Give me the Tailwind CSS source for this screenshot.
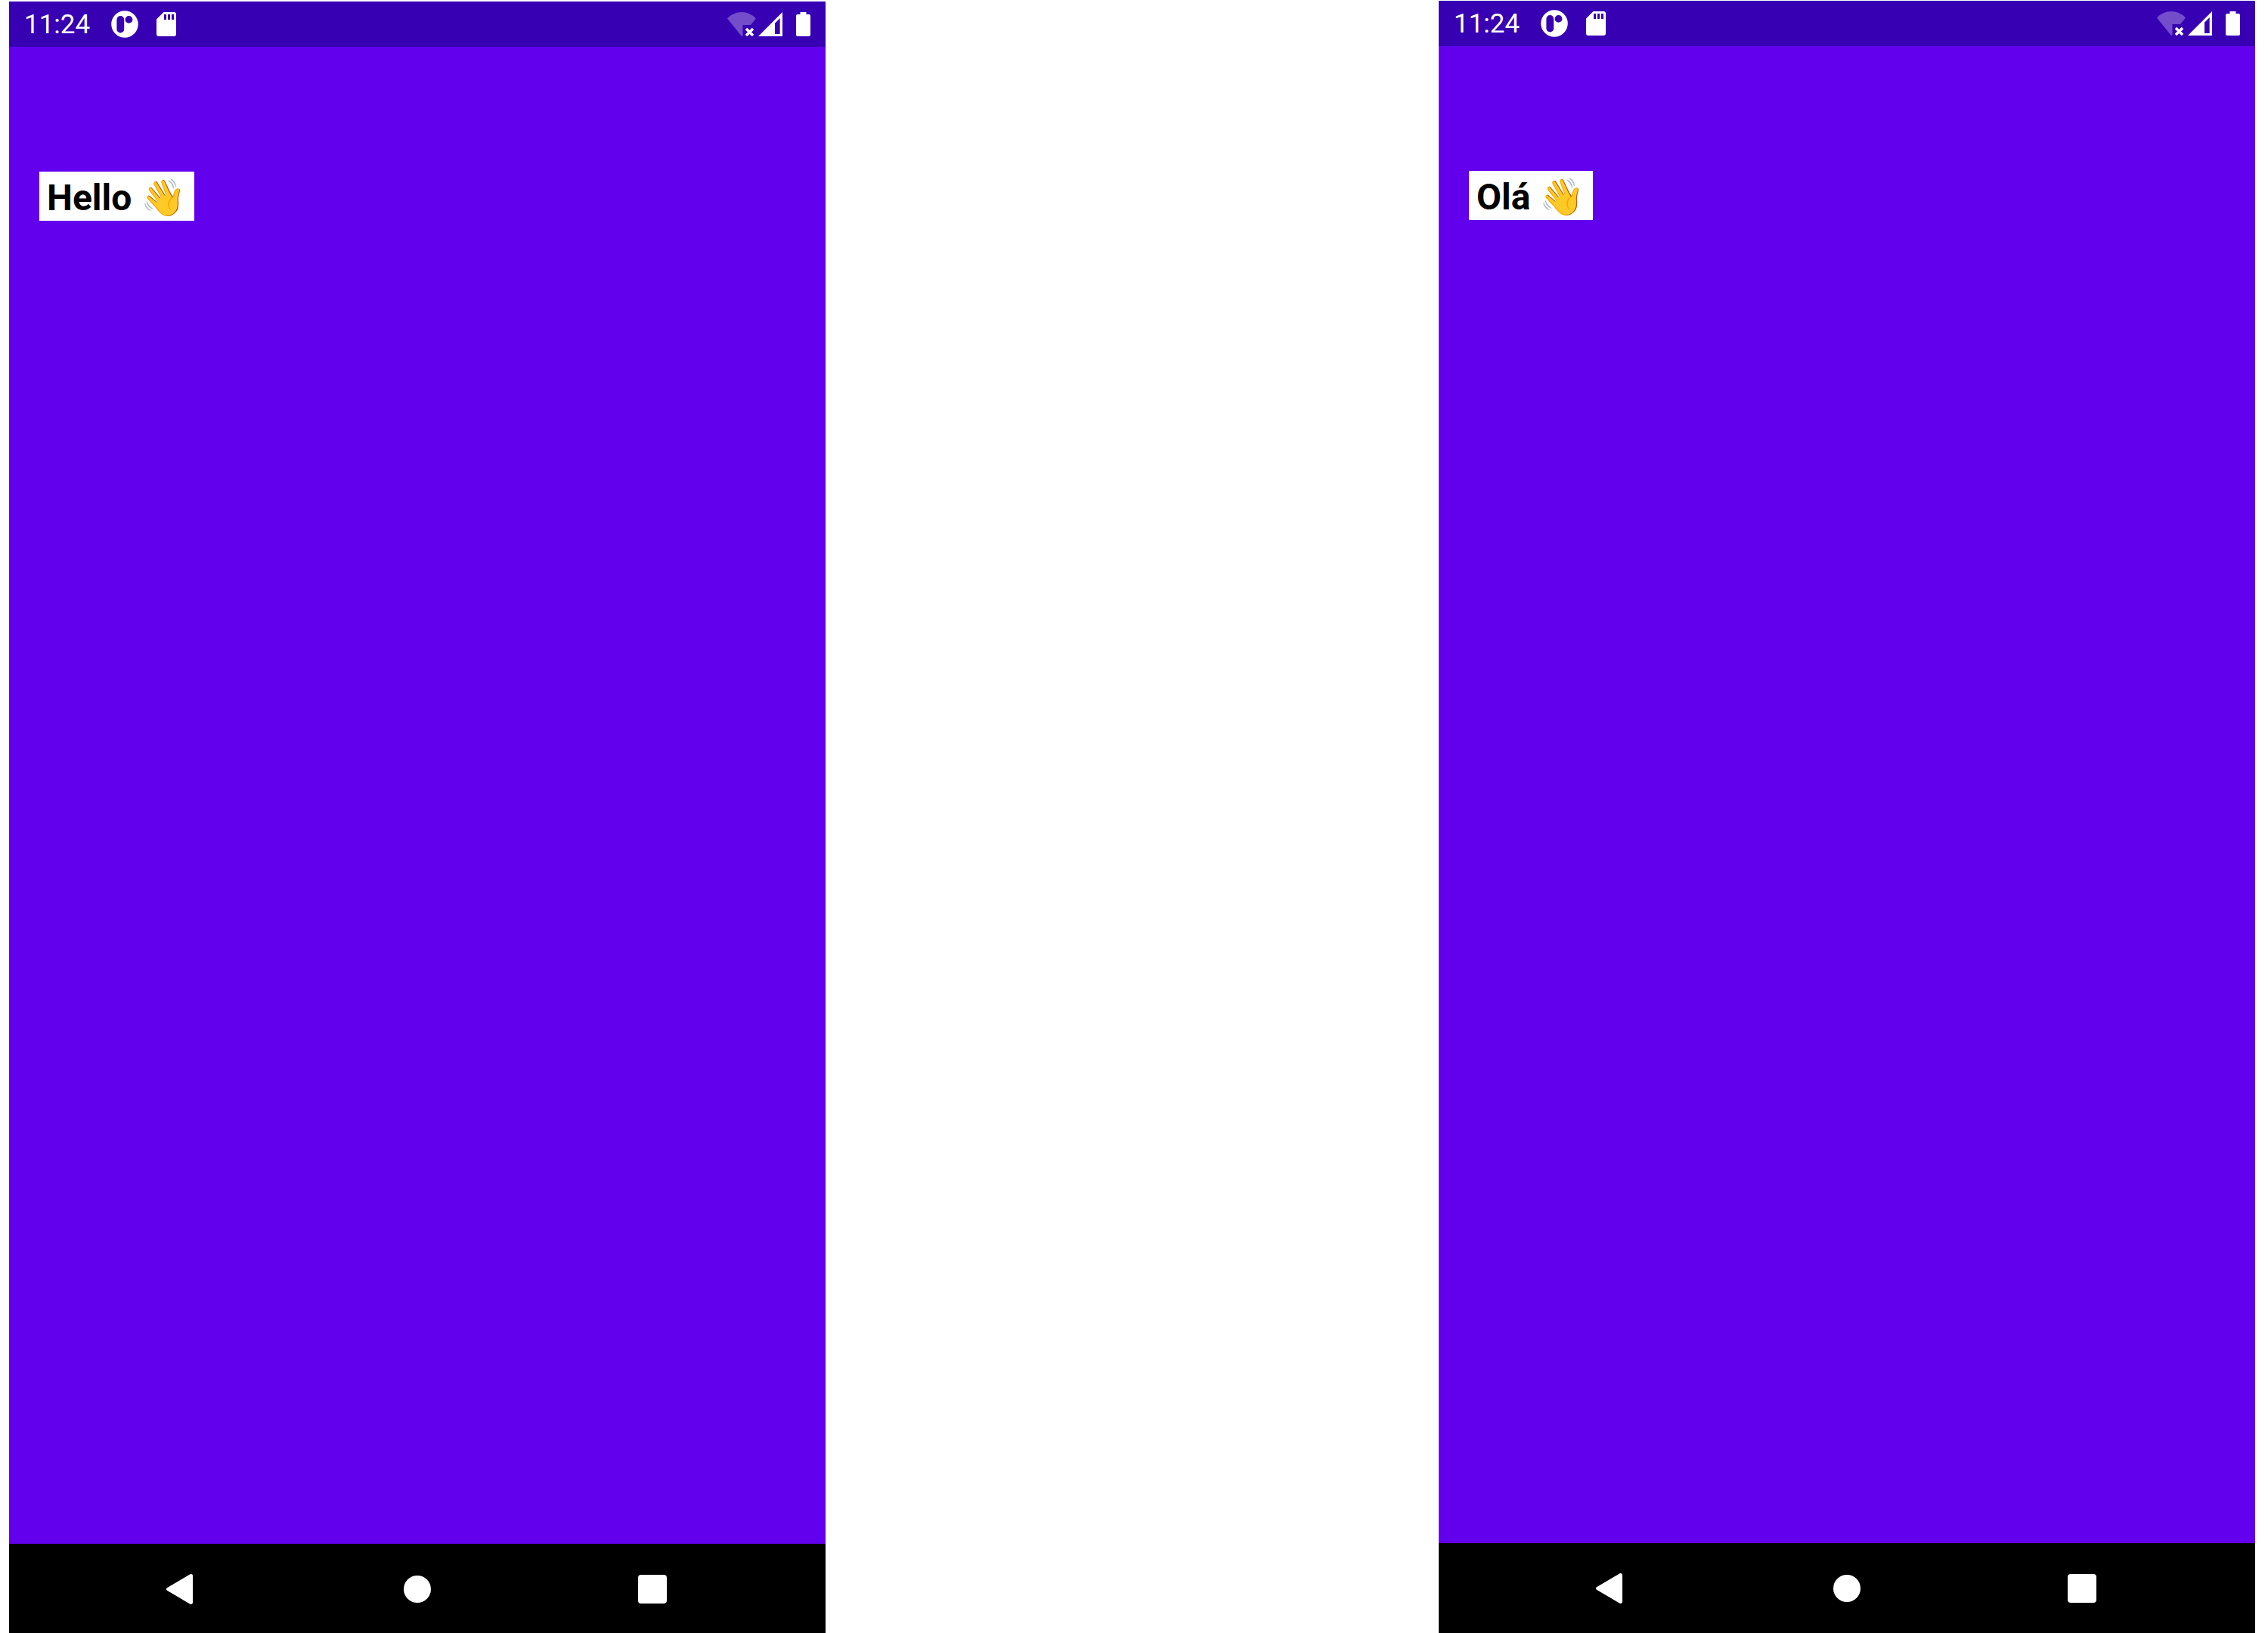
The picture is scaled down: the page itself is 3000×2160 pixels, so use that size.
<!DOCTYPE html>
<html lang="en">
<head>
<meta charset="utf-8">
<meta name="viewport" content="width=device-width, initial-scale=1">
<title>Greeting in two languages</title>
<script src="https://cdn.jsdelivr.net/npm/@tailwindcss/browser@4"></script>
</head>
<body class="bg-white">
<svg class="hidden" aria-hidden="true">
  <symbol id="app" viewBox="0 0 36 36"><path fill-rule="evenodd" d="M18 .2a17.8 17.8 0 1 0 0 35.6a17.8 17.8 0 1 0 0-35.6ZM12.300 7a4.900 4.900 0 0 1 4.900 4.900v12.700a4.900 4.900 0 0 1-9.800 0V11.900A4.900 4.900 0 0 1 12.300 7ZM23.500 7a4.900 4.900 0 1 1 0 9.800a4.900 4.900 0 1 1 0-9.800Z"/></symbol>
  <symbol id="sd" viewBox="0 0 26 34"><path fill-rule="evenodd" d="M9.500 1H23a3 3 0 0 1 3 3v26a3 3 0 0 1-3 3H3a3 3 0 0 1-3-3V10.500ZM10 4v7h3V4ZM15 4v7h3V4ZM20 4v7h3V4Z"/></symbol>
  <symbol id="wifi" viewBox="0 0 38 32"><path fill-opacity=".3" d="M0 8.500C5 3 12 0 19 0s14 3 19 8.500L31 17H20.500v14L19 32Z"/><path fill="none" stroke="currentColor" stroke-width="3.600" d="m25 22 9 9m0-9-9 9"/></symbol>
  <symbol id="signal" viewBox="0 0 32 32"><path fill-rule="evenodd" d="M32 0v32H0ZM28.700 8 22 14.700V29h6.700Z"/></symbol>
  <symbol id="battery" viewBox="0 0 19 32"><path d="M5.500 0h8v3H17a2 2 0 0 1 2 2v25a2 2 0 0 1-2 2H2a2 2 0 0 1-2-2V5a2 2 0 0 1 2-2h3.500Z"/></symbol>
  <symbol id="back" viewBox="0 0 35 40"><path d="M1 18.300 31.500.3C33.200-.5 35 .5 35 2.200v35.600c0 1.700-1.800 2.700-3.500 1.900L1 21.700C-.3 20.900-.3 19.100 1 18.300Z"/></symbol>
</svg>
<main class="flex h-screen items-start justify-between overflow-hidden pl-3 pr-[17px] font-['Roboto',sans-serif]">
  <section class="mt-0.5 flex h-screen w-[36vw] shrink-0 flex-col bg-[#6200ee]" aria-label="English">
    <header class="flex h-[60px] shrink-0 items-center bg-[#3700b3] px-5 text-white">
      <time class="pt-0.5 text-[35px] leading-10">11:24</time>
      <svg class="ml-7 size-9 fill-current"><use href="#app"/></svg>
      <svg class="ml-6 h-[34px] w-[26px] fill-current"><use href="#sd"/></svg>
      <svg class="ml-auto h-8 w-[38px] fill-current"><use href="#wifi"/></svg>
      <svg class="ml-[3px] size-8 fill-current"><use href="#signal"/></svg>
      <svg class="ml-[18px] h-8 w-[19px] fill-current"><use href="#battery"/></svg>
    </header>
    <div class="flex flex-1 items-start px-10 pt-[165px]">
      <p class="bg-white pl-2.5 pr-[11px] pt-1 text-[48px] leading-[61px] font-bold whitespace-nowrap text-black">Hello 👋</p>
    </div>
    <nav class="flex h-[120px] shrink-0 bg-black pl-[70px] pr-[74px] text-white">
      <button class="flex flex-1 items-center justify-center pr-1" aria-label="Back"><svg class="h-10 w-[35px] fill-current"><use href="#back"/></svg></button>
      <button class="flex flex-1 items-center justify-center" aria-label="Home"><span class="size-9 rounded-full bg-white"></span></button>
      <button class="flex flex-1 items-center justify-center" aria-label="Recent apps"><span class="size-[38px] rounded bg-white"></span></button>
    </nav>
  </section>
  <section class="mt-px flex h-screen w-[36vw] shrink-0 flex-col bg-[#6200ee]" lang="pt" aria-label="Português">
    <header class="flex h-[60px] shrink-0 items-center bg-[#3700b3] px-5 text-white">
      <time class="pt-0.5 text-[35px] leading-10">11:24</time>
      <svg class="ml-7 size-9 fill-current"><use href="#app"/></svg>
      <svg class="ml-6 h-[34px] w-[26px] fill-current"><use href="#sd"/></svg>
      <svg class="ml-auto h-8 w-[38px] fill-current"><use href="#wifi"/></svg>
      <svg class="ml-[3px] size-8 fill-current"><use href="#signal"/></svg>
      <svg class="ml-[18px] h-8 w-[19px] fill-current"><use href="#battery"/></svg>
    </header>
    <div class="flex flex-1 items-start px-10 pt-[165px]">
      <p class="bg-white pl-2.5 pr-[11px] pt-1 text-[48px] leading-[61px] font-bold whitespace-nowrap text-black">Olá 👋</p>
    </div>
    <nav class="flex h-[120px] shrink-0 bg-black pl-[70px] pr-[74px] text-white">
      <button class="flex flex-1 items-center justify-center pr-1" aria-label="Voltar"><svg class="h-10 w-[35px] fill-current"><use href="#back"/></svg></button>
      <button class="flex flex-1 items-center justify-center" aria-label="Início"><span class="size-9 rounded-full bg-white"></span></button>
      <button class="flex flex-1 items-center justify-center" aria-label="Recentes"><span class="size-[38px] rounded bg-white"></span></button>
    </nav>
  </section>
</main>
</body>
</html>
